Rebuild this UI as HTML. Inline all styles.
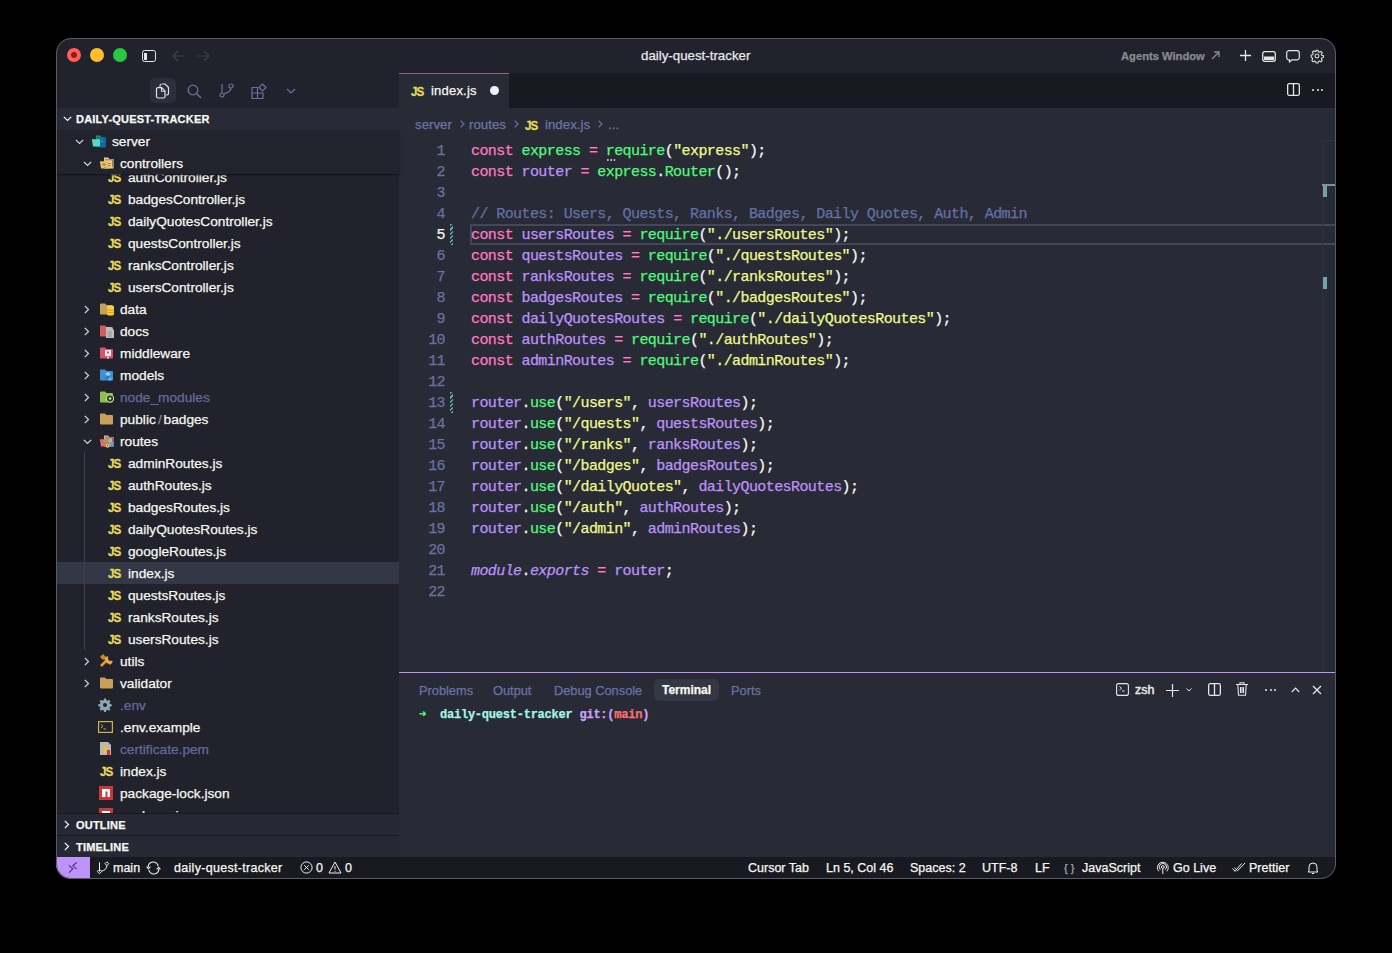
<!DOCTYPE html><html><head><meta charset="utf-8"><style>
*{box-sizing:border-box;margin:0;padding:0}
html,body{width:1392px;height:953px;background:#000;overflow:hidden}
body{position:relative;font-family:"Liberation Sans",sans-serif;color:#f8f8f2}
.a{position:absolute}
#win{position:absolute;left:0;top:0;width:1392px;height:953px;clip-path:inset(38px 56px 74px 56px round 15px)}
#frame{position:absolute;left:56px;top:38px;width:1280px;height:841px;border-radius:15px;border:1px solid #5b5c62}
.t{position:absolute;white-space:pre;line-height:1}
.tx{position:absolute;font-size:13.7px;line-height:14px;white-space:pre;color:#f8f8f2}
.js{position:absolute;font-weight:bold;font-size:11.6px;color:#e6dc5a;letter-spacing:-.9px;line-height:12px;white-space:pre;transform:scaleY(1.05)}
.code{position:absolute;left:471px;font-family:"Liberation Mono",monospace;font-size:15px;letter-spacing:-.58px;line-height:21px;height:21px;white-space:pre;color:#f8f8f2}
.ln{position:absolute;left:400px;width:45px;text-align:right;font-family:"Liberation Mono",monospace;font-size:15px;letter-spacing:-.6px;line-height:21px;color:#6b72a2}
.k{color:#ff79c6}.f{color:#50fa7b}.s{color:#f1fa8c}.v{color:#bd93f9}.c{color:#6272a4}.i{font-style:italic;color:#bd93f9}
.sb{position:absolute;top:862px;font-size:12.5px;line-height:13px;white-space:pre;color:#f8f8f2}
.pt{position:absolute;top:684px;font-size:12.8px;line-height:13px;white-space:pre;color:#6c72a4}
svg{position:absolute;overflow:visible}
#win div{-webkit-text-stroke:.25px currentColor}
</style></head><body><div id="win">
<div class="a" style="left:56px;top:38px;width:1280px;height:35px;background:#21222c"></div>
<div class="a" style="left:56px;top:73px;width:343px;height:784px;background:#21222c"></div>
<div class="a" style="left:56px;top:108px;width:343px;height:22px;background:#282a36"></div>
<div class="a" style="left:399px;top:73px;width:937px;height:784px;background:#282a36"></div>
<div class="a" style="left:399px;top:73px;width:937px;height:35px;background:#191a21"></div>
<div class="a" style="left:56px;top:857px;width:1280px;height:22px;background:#191a21"></div>
<div class="a" style="left:67px;top:48px;width:14px;height:14px;border-radius:50%;background:#ff5f57"></div>
<div class="a" style="left:90px;top:48px;width:14px;height:14px;border-radius:50%;background:#febc2e"></div>
<div class="a" style="left:113px;top:48px;width:14px;height:14px;border-radius:50%;background:#28c840"></div>
<div class="a" style="left:71px;top:52px;width:6px;height:6px;border-radius:50%;background:#8c1d18"></div>
<div class="a" style="left:142px;top:50px;width:14px;height:12px;border:1.3px solid #e6e6e6;border-radius:2.5px"></div>
<div class="a" style="left:144px;top:52.5px;width:3px;height:7px;background:#e6e6e6"></div>
<svg style="left:172px;top:50px" width="14" height="12"><path d="M1 6H13M1 6L6 1M1 6L6 11" stroke="#3c3e4c" stroke-width="1.2" fill="none"/></svg>
<svg style="left:196px;top:50px" width="14" height="12"><path d="M1 6H13M13 6L8 1M13 6L8 11" stroke="#3c3e4c" stroke-width="1.2" fill="none"/></svg>
<div class="t" style="left:641px;top:49px;font-size:13.3px;color:#e8e8ea">daily-quest-tracker</div>
<div class="t" style="left:1121px;top:50.5px;font-size:11.2px;font-weight:bold;color:#8a8b92">Agents Window</div>
<svg style="left:1211px;top:51px" width="9" height="9"><path d="M1 8L8 1M3 1H8V6" stroke="#8a8b92" stroke-width="1.4" fill="none"/></svg>
<svg style="left:1240px;top:50px" width="11" height="11"><path d="M5.5 0V11M0 5.5H11" stroke="#e6e6e6" stroke-width="1.3"/></svg>
<svg style="left:1262px;top:51px" width="14" height="11"><rect x=".7" y=".7" width="12.6" height="9.6" rx="2" stroke="#e6e6e6" stroke-width="1.3" fill="none"/><rect x="2" y="5.5" width="10" height="3.5" fill="#e6e6e6"/></svg>
<svg style="left:1286px;top:50px" width="14" height="13"><path d="M3 .7H11A2.3 2.3 0 0 1 13.3 3V7.5A2.3 2.3 0 0 1 11 9.8H6L3.5 12V9.8H3A2.3 2.3 0 0 1 .7 7.5V3A2.3 2.3 0 0 1 3 .7Z" stroke="#e6e6e6" stroke-width="1.2" fill="none"/></svg>
<svg style="left:1310px;top:49px" width="14" height="14" viewBox="0 0 24 24"><path d="M10.3 2h3.4l.6 2.8 1.9.8 2.4-1.6 2.4 2.4-1.6 2.4.8 1.9 2.8.6v3.4l-2.8.6-.8 1.9 1.6 2.4-2.4 2.4-2.4-1.6-1.9.8-.6 2.8h-3.4l-.6-2.8-1.9-.8-2.4 1.6-2.4-2.4 1.6-2.4-.8-1.9L2 13.7v-3.4l2.8-.6.8-1.9L4 5.4 6.4 3l2.4 1.6 1.9-.8z" stroke="#e6e6e6" stroke-width="1.8" fill="none" stroke-linejoin="round"/><circle cx="12" cy="12" r="3.3" stroke="#e6e6e6" stroke-width="1.8" fill="none"/></svg>
<div class="a" style="left:150px;top:78px;width:26px;height:25px;border-radius:5px;background:#2c2e3a"></div>
<svg style="left:155px;top:83px" width="15" height="16" viewBox="0 0 15 16"><path d="M6.5 1H10L13.5 4.5V10.5A1.5 1.5 0 0 1 12 12H11" stroke="#e0e0e8" stroke-width="1.2" fill="none" stroke-linejoin="round"/><path d="M6 1.2A1.5 1.5 0 0 0 5 2.5V4.5" stroke="#e0e0e8" stroke-width="1.2" fill="none"/><path d="M3 4.6H6.7L10 7.9V13.5A1.5 1.5 0 0 1 8.5 15H3A1.5 1.5 0 0 1 1.5 13.5V6.1A1.5 1.5 0 0 1 3 4.6Z" stroke="#e0e0e8" stroke-width="1.2" fill="none" stroke-linejoin="round"/><path d="M6.5 4.8V8.2H9.8" stroke="#e0e0e8" stroke-width="1.1" fill="none"/></svg>
<svg style="left:187px;top:84px" width="15" height="15"><circle cx="6" cy="6" r="4.8" stroke="#6a70a0" stroke-width="1.3" fill="none"/><path d="M9.5 9.5L14 14" stroke="#6a70a0" stroke-width="1.4"/></svg>
<svg style="left:219px;top:83px" width="15" height="15"><circle cx="3" cy="12" r="2" stroke="#6a70a0" stroke-width="1.2" fill="none"/><circle cx="12" cy="3" r="2" stroke="#6a70a0" stroke-width="1.2" fill="none"/><path d="M3 1V10M12 5C12 9 8 10 4.5 11" stroke="#6a70a0" stroke-width="1.2" fill="none"/></svg>
<svg style="left:251px;top:83px" width="16" height="16"><path d="M1 4.5H6.5V10H1ZM6.5 10H12V15.5H6.5ZM1 10H6.5V15.5H1Z" stroke="#6a70a0" stroke-width="1.2" fill="none"/><path d="M11.5 1L15 4.5L11.5 8L8 4.5Z" stroke="#6a70a0" stroke-width="1.2" fill="none"/></svg>
<svg style="left:286px;top:88px" width="10" height="6"><path d="M1 1L5 5L9 1" stroke="#6a70a0" stroke-width="1.2" fill="none"/></svg>
<svg style="left:63px;top:116px" width="9" height="6"><path d="M.8 .8L4.5 4.5L8.2 .8" stroke="#f8f8f2" stroke-width="1.2" fill="none"/></svg>
<div class="t" style="left:76px;top:114px;font-size:11px;font-weight:bold;letter-spacing:.2px;color:#f8f8f2">DAILY-QUEST-TRACKER</div>
<div class="a" style="left:56px;top:130px;width:343px;height:683px;overflow:hidden"><div class="a" style="left:-56px;top:-130px;width:1392px;height:953px"><div class="js" style="left:108px;top:172px">JS</div><div class="tx" style="left:128px;top:171px;color:#f8f8f2">authController.js</div><div class="js" style="left:108px;top:194px">JS</div><div class="tx" style="left:128px;top:193px;color:#f8f8f2">badgesController.js</div><div class="js" style="left:108px;top:216px">JS</div><div class="tx" style="left:128px;top:215px;color:#f8f8f2">dailyQuotesController.js</div><div class="js" style="left:108px;top:238px">JS</div><div class="tx" style="left:128px;top:237px;color:#f8f8f2">questsController.js</div><div class="js" style="left:108px;top:260px">JS</div><div class="tx" style="left:128px;top:259px;color:#f8f8f2">ranksController.js</div><div class="js" style="left:108px;top:282px">JS</div><div class="tx" style="left:128px;top:281px;color:#f8f8f2">usersController.js</div><svg style="left:84px;top:305px" width="6" height="9"><path d="M.8 .8L4.5 4.5L.8 8.2" stroke="#d8d8e0" stroke-width="1.2" fill="none"/></svg><svg style="left:99px;top:302px" width="16" height="14" viewBox="0 0 16 14"><path d="M1 2.5A1 1 0 0 1 2 1.5H6L7.5 3H13A1 1 0 0 1 14 4V11.5A1 1 0 0 1 13 12.5H2A1 1 0 0 1 1 11.5Z" fill="#c6a15b"/><ellipse cx="11.5" cy="5" rx="3.5" ry="1.5" fill="#f9cf3f"/><rect x="8" y="5" width="7" height="7" fill="#f9cf3f"/><ellipse cx="11.5" cy="12" rx="3.5" ry="1.5" fill="#f9cf3f"/><path d="M8 7.5Q11.5 9 15 7.5M8 10Q11.5 11.5 15 10" stroke="#b88a10" stroke-width=".7" fill="none"/></svg><div class="tx" style="left:120px;top:303px;color:#f8f8f2">data</div><svg style="left:84px;top:327px" width="6" height="9"><path d="M.8 .8L4.5 4.5L.8 8.2" stroke="#d8d8e0" stroke-width="1.2" fill="none"/></svg><svg style="left:99px;top:324px" width="16" height="14" viewBox="0 0 16 14"><path d="M1 2.5A1 1 0 0 1 2 1.5H6L7.5 3H13A1 1 0 0 1 14 4V11.5A1 1 0 0 1 13 12.5H2A1 1 0 0 1 1 11.5Z" fill="#d06060"/><path d="M7 3H12L15 6V14H7Z" fill="#bdbdbd"/><path d="M8.5 8H13M8.5 10H13M8.5 12H13" stroke="#8a8a8a" stroke-width=".8"/></svg><div class="tx" style="left:120px;top:325px;color:#f8f8f2">docs</div><svg style="left:84px;top:349px" width="6" height="9"><path d="M.8 .8L4.5 4.5L.8 8.2" stroke="#d8d8e0" stroke-width="1.2" fill="none"/></svg><svg style="left:99px;top:346px" width="16" height="14" viewBox="0 0 16 14"><path d="M1 2.5A1 1 0 0 1 2 1.5H6L7.5 3H13A1 1 0 0 1 14 4V11.5A1 1 0 0 1 13 12.5H2A1 1 0 0 1 1 11.5Z" fill="#d9536f"/><rect x="6" y="4" width="6" height="6" fill="#fde8ee"/><rect x="8" y="5.5" width="2" height="2" fill="#d9536f"/><path d="M9 10V13" stroke="#fde8ee" stroke-width="1"/></svg><div class="tx" style="left:120px;top:347px;color:#f8f8f2">middleware</div><svg style="left:84px;top:371px" width="6" height="9"><path d="M.8 .8L4.5 4.5L.8 8.2" stroke="#d8d8e0" stroke-width="1.2" fill="none"/></svg><svg style="left:99px;top:368px" width="16" height="14" viewBox="0 0 16 14"><path d="M1 2.5A1 1 0 0 1 2 1.5H6L7.5 3H13A1 1 0 0 1 14 4V11.5A1 1 0 0 1 13 12.5H2A1 1 0 0 1 1 11.5Z" fill="#3f8fd2"/><path d="M6 6L9 4L12 6L9 8Z" fill="#9fd0ff"/><path d="M9 8L12 10L9 12L6 10Z" fill="#1e6fb8"/><path d="M11 9L14 11L11 13L8 11Z" fill="#5fb0f0"/></svg><div class="tx" style="left:120px;top:369px;color:#f8f8f2">models</div><svg style="left:84px;top:393px" width="6" height="9"><path d="M.8 .8L4.5 4.5L.8 8.2" stroke="#d8d8e0" stroke-width="1.2" fill="none"/></svg><svg style="left:99px;top:390px" width="16" height="14" viewBox="0 0 16 14"><path d="M1 2.5A1 1 0 0 1 2 1.5H6L7.5 3H13A1 1 0 0 1 14 4V11.5A1 1 0 0 1 13 12.5H2A1 1 0 0 1 1 11.5Z" fill="#8bc34a"/><path d="M11 4.5L14.5 6.5V10.5L11 12.5L7.5 10.5V6.5Z" fill="#2e3b28" stroke="#c5e1a5" stroke-width="1"/><circle cx="11" cy="8.5" r="1.3" fill="#c5e1a5"/></svg><div class="tx" style="left:120px;top:391px;color:#636a9c">node_modules</div><svg style="left:84px;top:415px" width="6" height="9"><path d="M.8 .8L4.5 4.5L.8 8.2" stroke="#d8d8e0" stroke-width="1.2" fill="none"/></svg><svg style="left:99px;top:412px" width="16" height="14" viewBox="0 0 16 14"><path d="M1 2.5A1 1 0 0 1 2 1.5H6L7.5 3H13A1 1 0 0 1 14 4V11.5A1 1 0 0 1 13 12.5H2A1 1 0 0 1 1 11.5Z" fill="#c6a15b"/></svg><div class="tx" style="left:120px;top:413px;color:#f8f8f2">public<span style="color:#8a8a98;letter-spacing:-.5px">&#x2009;/&#x2009;</span>badges</div><svg style="left:83px;top:439px" width="9" height="6"><path d="M.8 .8L4.5 4.5L8.2 .8" stroke="#d8d8e0" stroke-width="1.2" fill="none"/></svg><svg style="left:99px;top:434px" width="16" height="14" viewBox="0 0 16 14"><path d="M5 1.5H9L10.5 3H14.6V12.6H5Z" fill="#e9a0a0"/><path d="M6 3.8H13.6V11" stroke="#21222c" stroke-width=".9" fill="none" opacity=".55"/><path d="M.8 5.3H9.6L10.6 12.6H2Z" fill="#e07070"/><rect x="6.5" y="4" width="3.5" height="4" fill="#6cc04a"/><rect x="10.5" y="8" width="4" height="4.5" fill="#5a9fe0"/><circle cx="8.5" cy="11.8" r="1.9" fill="#f5d142"/><circle cx="8.5" cy="11.8" r=".7" fill="#5a4a10"/></svg><div class="tx" style="left:120px;top:435px;color:#f8f8f2">routes</div><div class="js" style="left:108px;top:458px">JS</div><div class="tx" style="left:128px;top:457px;color:#f8f8f2">adminRoutes.js</div><div class="js" style="left:108px;top:480px">JS</div><div class="tx" style="left:128px;top:479px;color:#f8f8f2">authRoutes.js</div><div class="js" style="left:108px;top:502px">JS</div><div class="tx" style="left:128px;top:501px;color:#f8f8f2">badgesRoutes.js</div><div class="js" style="left:108px;top:524px">JS</div><div class="tx" style="left:128px;top:523px;color:#f8f8f2">dailyQuotesRoutes.js</div><div class="js" style="left:108px;top:546px">JS</div><div class="tx" style="left:128px;top:545px;color:#f8f8f2">googleRoutes.js</div><div class="a" style="left:56px;top:562px;width:343px;height:22px;background:#343746"></div><div class="js" style="left:108px;top:568px">JS</div><div class="tx" style="left:128px;top:567px;color:#f8f8f2">index.js</div><div class="js" style="left:108px;top:590px">JS</div><div class="tx" style="left:128px;top:589px;color:#f8f8f2">questsRoutes.js</div><div class="js" style="left:108px;top:612px">JS</div><div class="tx" style="left:128px;top:611px;color:#f8f8f2">ranksRoutes.js</div><div class="js" style="left:108px;top:634px">JS</div><div class="tx" style="left:128px;top:633px;color:#f8f8f2">usersRoutes.js</div><div class="a" style="left:84px;top:452px;width:1px;height:198px;background:#3d3f4e"></div><svg style="left:84px;top:657px" width="6" height="9"><path d="M.8 .8L4.5 4.5L.8 8.2" stroke="#d8d8e0" stroke-width="1.2" fill="none"/></svg><svg style="left:99px;top:654px" width="16" height="14" viewBox="0 0 16 14"><path d="M2 12L9 5M5 3L12 10" stroke="#e0a030" stroke-width="2.5"/><path d="M1 3L4 0L7 3L4 6Z" fill="#c98a20"/><path d="M9 3A3 3 0 1 0 13 7" stroke="#f0b040" stroke-width="2" fill="none"/></svg><div class="tx" style="left:120px;top:655px;color:#f8f8f2">utils</div><svg style="left:84px;top:679px" width="6" height="9"><path d="M.8 .8L4.5 4.5L.8 8.2" stroke="#d8d8e0" stroke-width="1.2" fill="none"/></svg><svg style="left:99px;top:676px" width="16" height="14" viewBox="0 0 16 14"><path d="M1 2.5A1 1 0 0 1 2 1.5H6L7.5 3H13A1 1 0 0 1 14 4V11.5A1 1 0 0 1 13 12.5H2A1 1 0 0 1 1 11.5Z" fill="#c6a15b"/></svg><div class="tx" style="left:120px;top:677px;color:#f8f8f2">validator</div><svg style="left:98px;top:698px" width="14" height="14" viewBox="0 0 24 24"><path d="M10.3 1h3.4l.6 3 2 .9 2.6-1.7 2.4 2.4-1.7 2.6.9 2 3 .6v3.4l-3 .6-.9 2 1.7 2.6-2.4 2.4-2.6-1.7-2 .9-.6 3h-3.4l-.6-3-2-.9-2.6 1.7-2.4-2.4 1.7-2.6-.9-2-3-.6v-3.4l3-.6.9-2-1.7-2.6L5.1 3.2l2.6 1.7 2-.9z" fill="#8fa8b8"/><circle cx="12" cy="12" r="3.5" fill="#21222c"/></svg><div class="tx" style="left:120px;top:699px;color:#636a9c">.env</div><svg style="left:98px;top:721px" width="15" height="12"><rect x=".6" y=".6" width="13.8" height="10.8" fill="none" stroke="#c8b84a" stroke-width="1.2"/><path d="M3 3.5L5 5.2L3 7M5.5 8H8" stroke="#c8b84a" stroke-width=".9" fill="none"/></svg><div class="tx" style="left:120px;top:721px;color:#f8f8f2">.env.example</div><svg style="left:99px;top:741px" width="13" height="15"><path d="M1 1H9L12 4V14H1Z" fill="#b8b8b8"/><circle cx="6" cy="7" r="2" fill="#f5c518"/><rect x="5" y="8" width="2" height="4" fill="#f5c518"/><rect x="8" y="9" width="3" height="5" fill="#d03030"/></svg><div class="tx" style="left:120px;top:743px;color:#636a9c">certificate.pem</div><div class="js" style="left:100px;top:766px">JS</div><div class="tx" style="left:120px;top:765px;color:#f8f8f2">index.js</div><svg style="left:99px;top:786px" width="14" height="14"><rect x="0" y="0" width="14" height="14" fill="#cb3837"/><path d="M3 11V3H11V11H8.5V5.5H6.5V11Z" fill="#fff"/></svg><div class="tx" style="left:120px;top:787px;color:#f8f8f2">package-lock.json</div><svg style="left:99px;top:808px" width="14" height="14"><rect x="0" y="0" width="14" height="14" fill="#cb3837"/><path d="M3 11V3H11V11H8.5V5.5H6.5V11Z" fill="#fff"/></svg><div class="tx" style="left:120px;top:809px;color:#f8f8f2">package.json</div></div></div>
<div class="a" style="left:56px;top:130px;width:343px;height:44px;background:#22232d;box-shadow:0 1px 2px #101117"></div>
<svg style="left:75px;top:139px" width="9" height="6"><path d="M.8 .8L4.5 4.5L8.2 .8" stroke="#d8d8e0" stroke-width="1.2" fill="none"/></svg><svg style="left:91px;top:134px" width="16" height="14" viewBox="0 0 16 14"><path d="M5 1.5H9L10.5 3H14.6V12.6H5Z" fill="#1f8f86"/><path d="M6 3.8H13.6V11" stroke="#21222c" stroke-width=".9" fill="none" opacity=".55"/><path d="M.8 5.3H9.6L10.6 12.6H2Z" fill="#5ad8c6"/><rect x="9" y="4.5" width="5.6" height="9" rx=".8" fill="#0b6fa4"/><circle cx="11" cy="7.5" r=".6" fill="#9fe3ff"/></svg><div class="tx" style="left:112px;top:135px;color:#f8f8f2">server</div>
<svg style="left:83px;top:161px" width="9" height="6"><path d="M.8 .8L4.5 4.5L8.2 .8" stroke="#d8d8e0" stroke-width="1.2" fill="none"/></svg><svg style="left:99px;top:156px" width="16" height="14" viewBox="0 0 16 14"><path d="M5 1.5H9L10.5 3H14.6V12.6H5Z" fill="#e9d08a"/><path d="M6 3.8H13.6V11" stroke="#21222c" stroke-width=".9" fill="none" opacity=".55"/><path d="M.8 5.3H9.6L10.6 12.6H2Z" fill="#e6c060"/><path d="M3 8.5H7M5 7V10M9 7.5H12M9 9.5H12" stroke="#b08a3a" stroke-width="1.1"/><circle cx="6" cy="12" r="1" fill="#6aa0d0"/></svg><div class="tx" style="left:120px;top:157px;color:#f8f8f2">controllers</div>
<div class="a" style="left:56px;top:813px;width:343px;height:1px;background:#191a21"></div>
<div class="a" style="left:56px;top:814px;width:343px;height:22px;background:#262834"></div>
<div class="a" style="left:56px;top:835px;width:343px;height:1px;background:#191a21"></div>
<div class="a" style="left:56px;top:836px;width:343px;height:21px;background:#262834"></div>
<svg style="left:64px;top:820px" width="6" height="9"><path d="M.8 .8L4.5 4.5L.8 8.2" stroke="#f8f8f2" stroke-width="1.2" fill="none"/></svg>
<div class="t" style="left:76px;top:820px;font-size:11px;font-weight:bold;letter-spacing:.2px">OUTLINE</div>
<svg style="left:64px;top:842px" width="6" height="9"><path d="M.8 .8L4.5 4.5L.8 8.2" stroke="#f8f8f2" stroke-width="1.2" fill="none"/></svg>
<div class="t" style="left:76px;top:842px;font-size:11px;font-weight:bold;letter-spacing:.2px">TIMELINE</div>
<div class="a" style="left:399px;top:73px;width:110px;height:35px;background:#282a36;border-top:1px solid #955f88"></div>
<div class="js" style="left:411px;top:86px">JS</div>
<div class="t" style="left:431px;top:84px;font-size:13px;letter-spacing:.2px;color:#f8f8f2">index.js</div>
<div class="a" style="left:490px;top:86px;width:9px;height:9px;border-radius:50%;background:#f0f0f4"></div>
<svg style="left:1287px;top:83px" width="13" height="13"><rect x=".65" y=".65" width="11.7" height="11.7" rx="1.5" stroke="#e6e6e6" stroke-width="1.3" fill="none"/><path d="M6.5 .65V12.35" stroke="#e6e6e6" stroke-width="1.3"/></svg>
<div class="a" style="left:1312px;top:89px;width:2px;height:2px;background:#e6e6e6;border-radius:1px"></div>
<div class="a" style="left:1316.5px;top:89px;width:2px;height:2px;background:#e6e6e6;border-radius:1px"></div>
<div class="a" style="left:1321px;top:89px;width:2px;height:2px;background:#e6e6e6;border-radius:1px"></div>
<div class="t" style="left:415px;top:118px;font-size:13.3px;color:#6e75a2">server</div>
<svg style="left:460px;top:120px" width="5" height="8"><path d="M.6 .6L4 4L.6 7.4" stroke="#6e75a2" stroke-width="1.1" fill="none"/></svg>
<div class="t" style="left:469px;top:118px;font-size:13.3px;color:#6e75a2">routes</div>
<svg style="left:514px;top:120px" width="5" height="8"><path d="M.6 .6L4 4L.6 7.4" stroke="#6e75a2" stroke-width="1.1" fill="none"/></svg>
<div class="js" style="left:525px;top:120px">JS</div>
<div class="t" style="left:545px;top:118px;font-size:13.3px;color:#6e75a2">index.js</div>
<svg style="left:598px;top:120px" width="5" height="8"><path d="M.6 .6L4 4L.6 7.4" stroke="#6e75a2" stroke-width="1.1" fill="none"/></svg>
<div class="t" style="left:608px;top:118px;font-size:13.3px;color:#6e75a2">...</div>
<div class="a" style="left:470px;top:224px;width:870px;height:21px;border:2px solid #44475a"></div>
<div class="ln" style="top:141px;color:#6b72a2">1</div>
<div class="code" style="top:141px"><span class="k">const</span> <span class="f">express</span> <span class="k">=</span> <span class="f">require</span>(<span class="s">"express"</span>);</div>
<div class="ln" style="top:162px;color:#6b72a2">2</div>
<div class="code" style="top:162px"><span class="k">const</span> <span class="v">router</span> <span class="k">=</span> <span class="f">express</span>.<span class="f">Router</span>();</div>
<div class="ln" style="top:183px;color:#6b72a2">3</div>
<div class="ln" style="top:204px;color:#6b72a2">4</div>
<div class="code" style="top:204px"><span class="c">// Routes: Users, Quests, Ranks, Badges, Daily Quotes, Auth, Admin</span></div>
<div class="ln" style="top:225px;color:#f8f8f2">5</div>
<div class="code" style="top:225px"><span class="k">const</span> <span class="v">usersRoutes</span> <span class="k">=</span> <span class="f">require</span>(<span class="s">"./usersRoutes"</span>);</div>
<div class="ln" style="top:246px;color:#6b72a2">6</div>
<div class="code" style="top:246px"><span class="k">const</span> <span class="v">questsRoutes</span> <span class="k">=</span> <span class="f">require</span>(<span class="s">"./questsRoutes"</span>);</div>
<div class="ln" style="top:267px;color:#6b72a2">7</div>
<div class="code" style="top:267px"><span class="k">const</span> <span class="v">ranksRoutes</span> <span class="k">=</span> <span class="f">require</span>(<span class="s">"./ranksRoutes"</span>);</div>
<div class="ln" style="top:288px;color:#6b72a2">8</div>
<div class="code" style="top:288px"><span class="k">const</span> <span class="v">badgesRoutes</span> <span class="k">=</span> <span class="f">require</span>(<span class="s">"./badgesRoutes"</span>);</div>
<div class="ln" style="top:309px;color:#6b72a2">9</div>
<div class="code" style="top:309px"><span class="k">const</span> <span class="v">dailyQuotesRoutes</span> <span class="k">=</span> <span class="f">require</span>(<span class="s">"./dailyQuotesRoutes"</span>);</div>
<div class="ln" style="top:330px;color:#6b72a2">10</div>
<div class="code" style="top:330px"><span class="k">const</span> <span class="v">authRoutes</span> <span class="k">=</span> <span class="f">require</span>(<span class="s">"./authRoutes"</span>);</div>
<div class="ln" style="top:351px;color:#6b72a2">11</div>
<div class="code" style="top:351px"><span class="k">const</span> <span class="v">adminRoutes</span> <span class="k">=</span> <span class="f">require</span>(<span class="s">"./adminRoutes"</span>);</div>
<div class="ln" style="top:372px;color:#6b72a2">12</div>
<div class="ln" style="top:393px;color:#6b72a2">13</div>
<div class="code" style="top:393px"><span class="v">router</span>.<span class="f">use</span>(<span class="s">"/users"</span>, <span class="v">usersRoutes</span>);</div>
<div class="ln" style="top:414px;color:#6b72a2">14</div>
<div class="code" style="top:414px"><span class="v">router</span>.<span class="f">use</span>(<span class="s">"/quests"</span>, <span class="v">questsRoutes</span>);</div>
<div class="ln" style="top:435px;color:#6b72a2">15</div>
<div class="code" style="top:435px"><span class="v">router</span>.<span class="f">use</span>(<span class="s">"/ranks"</span>, <span class="v">ranksRoutes</span>);</div>
<div class="ln" style="top:456px;color:#6b72a2">16</div>
<div class="code" style="top:456px"><span class="v">router</span>.<span class="f">use</span>(<span class="s">"/badges"</span>, <span class="v">badgesRoutes</span>);</div>
<div class="ln" style="top:477px;color:#6b72a2">17</div>
<div class="code" style="top:477px"><span class="v">router</span>.<span class="f">use</span>(<span class="s">"/dailyQuotes"</span>, <span class="v">dailyQuotesRoutes</span>);</div>
<div class="ln" style="top:498px;color:#6b72a2">18</div>
<div class="code" style="top:498px"><span class="v">router</span>.<span class="f">use</span>(<span class="s">"/auth"</span>, <span class="v">authRoutes</span>);</div>
<div class="ln" style="top:519px;color:#6b72a2">19</div>
<div class="code" style="top:519px"><span class="v">router</span>.<span class="f">use</span>(<span class="s">"/admin"</span>, <span class="v">adminRoutes</span>);</div>
<div class="ln" style="top:540px;color:#6b72a2">20</div>
<div class="ln" style="top:561px;color:#6b72a2">21</div>
<div class="code" style="top:561px"><span class="i">module</span>.<span class="i">exports</span> <span class="k">=</span> <span class="v">router</span>;</div>
<div class="ln" style="top:582px;color:#6b72a2">22</div>
<div class="a" style="left:607px;top:159px;width:9px;height:2px;background-image:linear-gradient(90deg,#b8b8c8 50%,transparent 50%);background-size:3.3px 2px"></div>
<div class="a" style="left:450px;top:224px;width:3px;height:21px;background:repeating-linear-gradient(-45deg,#5fa8b0 0 1.5px,transparent 1.5px 3px)"></div>
<div class="a" style="left:450px;top:392px;width:3px;height:21px;background:repeating-linear-gradient(-45deg,#5fa8b0 0 1.5px,transparent 1.5px 3px)"></div>
<div class="a" style="left:1322px;top:140px;width:1px;height:532px;background:#30323e"></div>
<div class="a" style="left:1322px;top:140px;width:14px;height:1px;background:#30323e"></div>
<div class="a" style="left:1322px;top:184px;width:14px;height:2px;background:#8a8c98"></div>
<div class="a" style="left:1323px;top:186px;width:4px;height:11px;background:#6fa4ac"></div>
<div class="a" style="left:1323px;top:277px;width:4px;height:12px;background:#6fa4ac"></div>
<div class="a" style="left:399px;top:672px;width:937px;height:1px;background:#bd93f9"></div>
<div class="a" style="left:654px;top:679px;width:65px;height:22px;border-radius:5px;background:#353745"></div>
<div class="pt" style="left:419px">Problems</div>
<div class="pt" style="left:493px">Output</div>
<div class="pt" style="left:554px">Debug Console</div>
<div class="pt" style="left:662px;color:#f8f8f2;font-weight:bold;font-size:12px">Terminal</div>
<div class="pt" style="left:731px">Ports</div>
<svg style="left:1116px;top:683px" width="13" height="13"><rect x=".6" y=".6" width="11.8" height="11.8" rx="2" stroke="#e6e6e6" stroke-width="1.1" fill="none"/><path d="M3.5 3.5L5.5 5.3L3.5 7M6 8H8.5" stroke="#e6e6e6" stroke-width="1" fill="none"/></svg>
<div class="t" style="left:1135px;top:684px;font-size:12.5px;-webkit-text-stroke:.5px #e6e6e6;color:#e6e6e6">zsh</div>
<svg style="left:1166px;top:684px" width="13" height="13"><path d="M6.5 0V13M0 6.5H13" stroke="#e6e6e6" stroke-width="1.2"/></svg>
<svg style="left:1186px;top:688px" width="6" height="4"><path d="M.5 .5L3 3L5.5 .5" stroke="#e6e6e6" stroke-width="1" fill="none"/></svg>
<svg style="left:1208px;top:683px" width="13" height="13"><rect x=".65" y=".65" width="11.7" height="11.7" rx="1.5" stroke="#e6e6e6" stroke-width="1.3" fill="none"/><path d="M6.5 .65V12.35" stroke="#e6e6e6" stroke-width="1.3"/></svg>
<svg style="left:1236px;top:682px" width="12" height="14"><path d="M0 2.5H12M4 2.5V.8H8V2.5M1.8 2.5L2.5 13.3H9.5L10.2 2.5M4.5 5V11M6 5V11M7.5 5V11" stroke="#e6e6e6" stroke-width="1.1" fill="none"/></svg>
<div class="a" style="left:1265px;top:689px;width:2px;height:2px;background:#e6e6e6;border-radius:1px"></div>
<div class="a" style="left:1269.5px;top:689px;width:2px;height:2px;background:#e6e6e6;border-radius:1px"></div>
<div class="a" style="left:1274px;top:689px;width:2px;height:2px;background:#e6e6e6;border-radius:1px"></div>
<svg style="left:1291px;top:687px" width="9" height="6"><path d="M.8 5L4.5 1.2L8.2 5" stroke="#e6e6e6" stroke-width="1.2" fill="none"/></svg>
<svg style="left:1312px;top:685px" width="10" height="10"><path d="M1 1L9 9M9 1L1 9" stroke="#e6e6e6" stroke-width="1.3"/></svg>
<div class="t mono" style="left:419px;top:709px;font-family:'Liberation Mono',monospace;font-size:12px;font-weight:bold;color:#50fa7b">&#x279C;</div>
<div class="t" style="left:440px;top:708.5px;font-family:'Liberation Mono',monospace;font-size:12px;letter-spacing:-.23px;font-weight:bold"><span style="color:#a4f5e4">daily-quest-tracker</span> <span style="color:#cda2fb">git:(</span><span style="color:#ff6e6e">main</span><span style="color:#cda2fb">)</span></div>
<div class="a" style="left:56px;top:857px;width:34px;height:22px;background:#bd93f9"></div>
<svg style="left:56px;top:857px" width="34" height="22"><path d="M20.7 5.3L16.8 8.8L20.7 12.2M12.9 8.3L16.8 11.8L12.9 15.7" stroke="#4a2e7e" stroke-width="1.1" fill="none"/></svg>
<svg style="left:96px;top:861px" width="14" height="14"><path d="M3.5 1.3V10.5" stroke="#f0f0f2" stroke-width="1" fill="none"/><path d="M3.5 8.3L5.7 10.5L3.5 12.7L1.3 10.5Z" stroke="#f0f0f2" stroke-width="1" fill="none"/><path d="M10.9 .8L12.8 2.7L10.9 4.6L9 2.7Z" stroke="#f0f0f2" stroke-width="1" fill="none"/><path d="M10.9 4.6C10.9 8 8.5 9.5 5.5 10" stroke="#f0f0f2" stroke-width="1" fill="none"/></svg>
<div class="sb" style="left:113px">main</div>
<svg style="left:146px;top:862px" width="15" height="12"><path d="M2.2 5A5 4.6 0 0 1 12.2 4.2M12.8 7A5 4.6 0 0 1 2.8 7.8" stroke="#f0f0f2" stroke-width="1.1" fill="none"/><path d="M.6 4.6L2.4 6.6L4.4 4.6M10.6 7.4L12.6 5.4L14.4 7.4" stroke="#f0f0f2" stroke-width="1.1" fill="none"/></svg>
<div class="sb" style="left:174px;letter-spacing:.3px">daily-quest-tracker</div>
<svg style="left:300px;top:861px" width="13" height="13"><circle cx="6.5" cy="6.5" r="5.6" stroke="#f0f0f2" stroke-width="1" fill="none"/><path d="M4.3 4.3L8.7 8.7M8.7 4.3L4.3 8.7" stroke="#f0f0f2" stroke-width="1"/></svg>
<div class="sb" style="left:316px">0</div>
<svg style="left:328px;top:861px" width="14" height="13"><path d="M7 1L13 12H1Z" stroke="#f0f0f2" stroke-width="1" fill="none" stroke-linejoin="round"/><path d="M7 5V8.5M7 9.8V10.8" stroke="#f0f0f2" stroke-width="1"/></svg>
<div class="sb" style="left:345px">0</div>
<div class="sb" style="left:748px">Cursor Tab</div>
<div class="sb" style="left:826px">Ln 5, Col 46</div>
<div class="sb" style="left:910px">Spaces: 2</div>
<div class="sb" style="left:982px">UTF-8</div>
<div class="sb" style="left:1035px">LF</div>
<div class="sb" style="left:1064px;top:862px;font-size:11px;color:#a8a8b2">{ }</div>
<div class="sb" style="left:1082px">JavaScript</div>
<svg style="left:1157px;top:862px" width="12" height="12"><circle cx="5.8" cy="5" r="1.4" stroke="#f0f0f2" stroke-width="1" fill="none"/><path d="M3.3 7.6A3.6 3.6 0 1 1 8.3 7.6M1.8 9.3A5.4 5.4 0 1 1 9.8 9.3M5.8 6.5V12" stroke="#f0f0f2" stroke-width="1" fill="none"/></svg>
<div class="sb" style="left:1173px">Go Live</div>
<svg style="left:1232px;top:862px" width="14" height="11"><path d="M.6 6.5L3 9.3L9.5 1.5M5 9.3L13 1M2.5 5.5L4.3 7.5" stroke="#f0f0f2" stroke-width="1" fill="none"/></svg>
<div class="sb" style="left:1249px">Prettier</div>
<svg style="left:1307px;top:861px" width="12" height="14"><path d="M2 10V6A4 4 0 0 1 10 6V10L11 11H1Z" stroke="#f0f0f2" stroke-width="1" fill="none" stroke-linejoin="round"/><path d="M4.8 12.5H7.2" stroke="#f0f0f2" stroke-width="1"/></svg>
</div><div id="frame"></div></body></html>
